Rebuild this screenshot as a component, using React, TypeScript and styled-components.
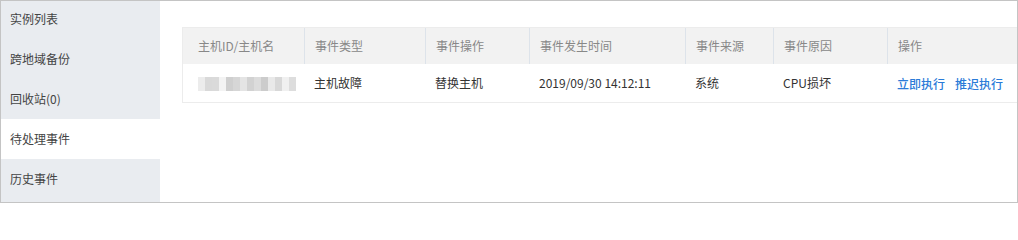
import React from 'react';
import styled, { createGlobalStyle } from 'styled-components';

const GlobalStyle = createGlobalStyle`
  html, body {
    margin: 0;
    padding: 0;
    background: #fff;
  }
  body {
    font-family: 'Noto Sans CJK SC', 'Liberation Sans', sans-serif;
  }
`;

const menuItems = ['实例列表', '跨地域备份', '回收站(0)', '待处理事件', '历史事件'];
const activeIndex = 3;

const columns = [
  { title: '主机ID/主机名', width: 121 },
  { title: '事件类型', width: 121 },
  { title: '事件操作', width: 104 },
  { title: '事件发生时间', width: 156 },
  { title: '事件来源', width: 88 },
  { title: '事件原因', width: 114 },
  { title: '操作', width: 130 },
];

const mosaic = ['#ececec', '#d9d9d9', '#dadada', '#f3f3f3', '#cfcfcf', '#d6d6d6', '#e4e4e4', '#d2d2d2', '#dcdcdc', '#cccccc', '#e9e9e9', '#d8d8d8', '#f0f0f0', '#dddddd'];

const App: React.FC = () => {
  const template = columns.map((c) => `${c.width}px`).join(' ');

  return (
    <>
      <GlobalStyle />
      <Frame>
        <Sidebar>
          {menuItems.map((item, i) => (
            <MenuItem key={item} $active={i === activeIndex}>
              {item}
            </MenuItem>
          ))}
        </Sidebar>
        <Main>
          <Table>
            <HeaderRow style={{ gridTemplateColumns: template }}>
              {columns.map((c, i) => (
                <HeaderCell key={c.title} $first={i === 0}>
                  {c.title}
                </HeaderCell>
              ))}
            </HeaderRow>
            <BodyRow style={{ gridTemplateColumns: template }}>
              <BodyCell $first>
                <Mosaic>
                  {mosaic.map((shade, i) => (
                    <MosaicCell key={i} $shade={shade} />
                  ))}
                </Mosaic>
              </BodyCell>
              <BodyCell>主机故障</BodyCell>
              <BodyCell>替换主机</BodyCell>
              <BodyCell>2019/09/30 14:12:11</BodyCell>
              <BodyCell>系统</BodyCell>
              <BodyCell>CPU损坏</BodyCell>
              <BodyCell>
                <Actions>
                  <ActionLink>立即执行</ActionLink>
                  <ActionLink>推迟执行</ActionLink>
                </Actions>
              </BodyCell>
            </BodyRow>
          </Table>
        </Main>
      </Frame>
    </>
  );
};

export default App;

const Frame = styled.div`
  box-sizing: border-box;
  width: 1018px;
  height: 203px;
  border: 1px solid #c4c4c4;
  display: flex;
  overflow: hidden;
`;

const Sidebar = styled.div`
  width: 159px;
  flex-shrink: 0;
  background: #e9ecf0;
  display: flex;
  flex-direction: column;
`;

const MenuItem = styled.div<{ $active?: boolean }>`
  height: 40px;
  line-height: 40px;
  padding-left: 9px;
  font-size: 12px;
  color: #444;
  background: ${(p) => (p.$active ? '#ffffff' : 'transparent')};

  &:first-child {
    height: 38px;
    line-height: 36px;
  }
`;

const Main = styled.div`
  flex: 1;
  padding: 26px 0 0 22px;
  min-width: 0;
`;

const Table = styled.div`
  border: 1px solid #ececec;
  border-right: none;
  width: 836px;
  box-sizing: border-box;
`;

const HeaderRow = styled.div`
  display: grid;
  height: 36px;
  background: #f2f2f2;
`;

const HeaderCell = styled.div<{ $first?: boolean }>`
  display: flex;
  align-items: center;
  padding-left: ${(p) => (p.$first ? '15px' : '10px')};
  padding-bottom: 2px;
  border-left: ${(p) => (p.$first ? 'none' : '1px solid #dde3ea')};
  font-size: 12px;
  color: #888;
  white-space: nowrap;
`;

const BodyRow = styled.div`
  display: grid;
  height: 38px;
  background: #fff;
`;

const BodyCell = styled.div<{ $first?: boolean }>`
  display: flex;
  align-items: center;
  padding-left: ${(p) => (p.$first ? '15px' : '10px')};
  padding-bottom: 1px;
  font-size: 12px;
  color: #333;
  white-space: nowrap;
`;

const Mosaic = styled.div`
  display: flex;
  height: 14px;
  filter: blur(0.6px);
  margin-top: 2px;
`;

const MosaicCell = styled.span<{ $shade: string }>`
  width: 7px;
  height: 14px;
  background: ${(p) => p.$shade};
`;

const Actions = styled.div`
  display: flex;
  gap: 10px;
  margin-top: 2px;
`;

const ActionLink = styled.a`
  color: #2a7bd8;
  font-size: 12px;
  font-weight: 500;
  cursor: pointer;
`;
